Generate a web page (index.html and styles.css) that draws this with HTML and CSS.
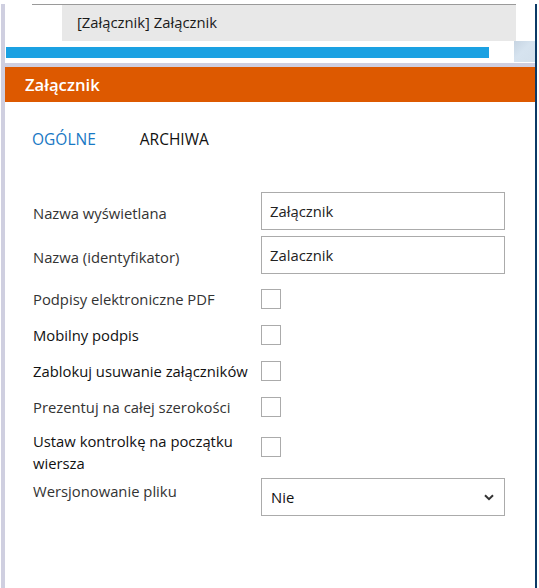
FILE: index.html
```html
<!DOCTYPE html>
<html lang="pl">
<head>
<meta charset="utf-8">
<title>Załącznik</title>
<link rel="stylesheet" href="styles.css">
</head>
<body>
<div class="frame">
  <div class="tabstrip">
    <div class="tab-active">[Załącznik] Załącznik</div>
  </div>
  <div class="progress-row">
    <div class="progress"></div>
    <div class="corner"></div>
  </div>
  <div class="band"></div>
  <div class="header">Załącznik</div>

  <div class="tabs">
    <span class="tab tab-on">OGÓLNE</span>
    <span class="tab">ARCHIWA</span>
  </div>

  <div class="form">
    <div class="row row-input">
      <label class="lbl muted">Nazwa wyświetlana</label>
      <div class="input">Załącznik</div>
    </div>
    <div class="row row-input">
      <label class="lbl muted">Nazwa (identyfikator)</label>
      <div class="input">Zalacznik</div>
    </div>
    <div class="row row-check">
      <label class="lbl muted">Podpisy elektroniczne PDF</label>
      <div class="check"></div>
    </div>
    <div class="row row-check">
      <label class="lbl">Mobilny podpis</label>
      <div class="check"></div>
    </div>
    <div class="row row-check">
      <label class="lbl">Zablokuj usuwanie załączników</label>
      <div class="check"></div>
    </div>
    <div class="row row-check">
      <label class="lbl muted">Prezentuj na całej szerokości</label>
      <div class="check"></div>
    </div>
    <div class="row row-check2">
      <label class="lbl">Ustaw kontrolkę na początku wiersza</label>
      <div class="check"></div>
    </div>
    <div class="row row-select">
      <label class="lbl muted">Wersjonowanie pliku</label>
      <div class="select">
        <span>Nie</span>
        <svg class="chev" width="10" height="7" viewBox="0 0 10 7"><path d="M1 1.2 L5 5.2 L9 1.2" fill="none" stroke="#333" stroke-width="2"/></svg>
      </div>
    </div>
  </div>
</div>
</body>
</html>
```
FILE: styles.css
```css
* { box-sizing: border-box; }
html, body { margin: 0; padding: 0; background: #fff; }
body {
  font-family: "Open Sans", "Noto Sans", "Liberation Sans", sans-serif;
  color: #1e1e1e;
}
.frame {
  margin-left: 1px;
  width: 536px;
  height: 587px;
  border-left: 4px solid #cfcfe0;
  border-right: 2px solid #0b3a66;
  border-bottom: 2px solid #0b3a66;
  background: #fff;
}
.tabstrip {
  margin: 4px 0 0 27px;
  width: 484px;
  border-top: 1px solid #9a9a9a;
  padding-left: 30px;
}
.tab-active {
  height: 36px;
  background: #e8e8e8;
  padding-left: 15px;
  font-size: 14.8px;
  line-height: 34px;
  color: #1a1a1a;
}
.progress-row {
  display: flex;
  height: 22px;
}
.progress {
  margin: 6px 0 0 1px;
  width: 483px;
  height: 11px;
  background: #1ba1e2;
}
.corner {
  margin-left: auto;
  width: 21px;
  height: 21px;
  background: linear-gradient(135deg, #c6d4e2 0%, #d6e3ef 45%, #d3e0ec 100%);
}
.band {
  height: 4px;
  background: #cfcfe0;
}
.header {
  height: 35px;
  background: #dd5900;
  color: #fff;
  font-size: 16.7px;
  font-weight: 600;
  line-height: 35px;
  padding-left: 20px;
}
.tabs {
  display: flex;
  gap: 44px;
  margin-top: 26px;
  padding-left: 27px;
  font-size: 15.5px;
  line-height: 22px;
}
.tab { color: #111; }
.tab-on { color: #1878c4; }
.form {
  margin-top: 42px;
  padding-left: 28px;
  font-size: 14.8px;
}
.row {
  display: grid;
  grid-template-columns: 228px 244px;
  align-items: start;
}
.lbl {
  line-height: 22px;
  color: #111;
  padding-right: 8px;
}
.lbl.muted { color: #333; }
.row-input { height: 38px; margin-bottom: 6px; }
.row-input .lbl { padding-top: 10px; }
.input {
  height: 38px;
  border: 1px solid #ababab;
  padding-left: 8px;
  line-height: 36px;
  color: #222;
}
.row-check { height: 36px; }
.row-check .lbl { padding-top: 8px; }
.check {
  margin-top: 9px;
  width: 20px;
  height: 20px;
  border: 1px solid #ababab;
}
.row-check2 { height: 50px; }
.row-check2 .lbl { padding-top: 6px; }
.row-check2 .check { margin-top: 13px; }
.row-select { margin-top: 4px; }
.row-select .lbl { padding-top: 2px; }
.select {
  height: 38px;
  border: 1px solid #ababab;
  display: flex;
  align-items: center;
  justify-content: space-between;
  padding: 0 10px 0 9px;
  color: #111;
}
.chev { display: block; }
```
